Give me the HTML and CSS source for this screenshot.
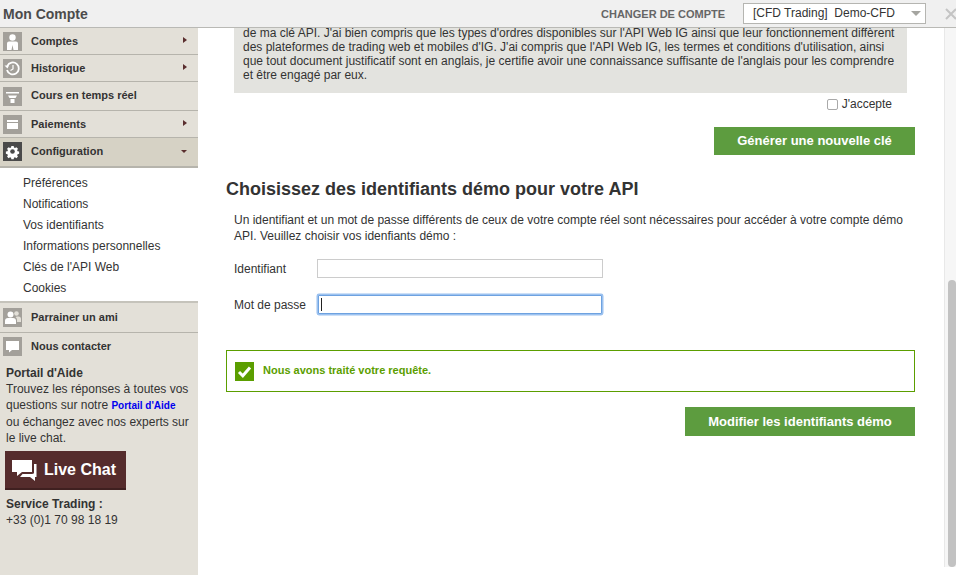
FILE: index.html
```html
<!DOCTYPE html>
<html lang="fr">
<head>
<meta charset="utf-8">
<title>Mon Compte</title>
<link rel="stylesheet" href="styles.css">
</head>
<body>
<div class="app">
  <header class="topbar">
    <div class="title">Mon Compte</div>
    <div class="switch-label">CHANGER DE COMPTE</div>
    <div class="select"><span>[CFD Trading]&nbsp; Demo-CFD</span><i class="select-arrow"></i></div>
    <svg class="close" width="16" height="16" viewBox="0 0 16 16"><path d="M3 3l10 10M13 3L3 13" stroke="#c4c4c4" stroke-width="2" fill="none"/></svg>
  </header>
  <div class="body">
    <aside class="sidebar">
      <nav>
        <a class="item item-a"><span class="ico"><svg viewBox="0 0 19 19"><circle cx="9.5" cy="5.5" r="3.2" fill="#fff"/><path d="M4 18v-6.500q0-2 2-2h7q2 0 2 2V18h-4.500l-1-5-1 5z" fill="#fff"/></svg></span><span class="label">Comptes</span><i class="arrow-r"></i></a>
        <a class="item item-b"><span class="ico"><svg viewBox="0 0 19 19"><path d="M4.300 7a6 6 0 1 1-.3 4" stroke="#fff" stroke-width="1.800" fill="none"/><path d="M1.500 6.500h4.500l-1.500 3z" fill="#fff"/><path d="M10 6v4l-2.500 1.500" stroke="#fff" stroke-width="1.200" fill="none"/></svg></span><span class="label">Historique</span><i class="arrow-r"></i></a>
        <a class="item item-a item-c"><span class="ico"><svg viewBox="0 0 19 19"><path d="M3 5h13v1.500H3zM5 8.500h9L12.500 11h-6zM7.500 12h4v4h-4z" fill="#fff"/></svg></span><span class="label">Cours en temps réel</span></a>
        <a class="item item-b"><span class="ico"><svg viewBox="0 0 19 19"><path d="M4 5h11v9H4z" fill="#fff"/><path d="M4 7h11v1H4z" fill="#a3a09a"/></svg></span><span class="label">Paiements</span><i class="arrow-r"></i></a>
        <a class="item item-open"><span class="ico ico-dark"><svg viewBox="0 0 19 19"><path d="M8 2.500h3l.4 2 1.300.6 1.800-1.100 2 2-1.100 1.800.6 1.300 2 .4v3l-2 .4-.6 1.300 1.100 1.800-2 2-1.800-1.100-1.300.6-.4 2H8l-.4-2-1.300-.6-1.800 1.100-2-2 1.100-1.800-.6-1.300-2-.4v-3l2-.4.6-1.300L2.500 6l2-2 1.800 1.100 1.300-.6z" transform="translate(2.100 2.100) scale(.78)" fill="#fff"/><circle cx="9.500" cy="9.500" r="2.300" fill="#4a4a4a"/></svg></span><span class="label">Configuration</span><i class="arrow-d"></i></a>
      </nav>
      <ul class="submenu">
        <li>Préférences</li>
        <li>Notifications</li>
        <li>Vos identifiants</li>
        <li>Informations personnelles</li>
        <li>Clés de l'API Web</li>
        <li>Cookies</li>
      </ul>
      <nav class="nav-second">
        <a class="item item-d"><span class="ico"><svg viewBox="0 0 19 19"><circle cx="7.500" cy="6.500" r="3" fill="#fff"/><path d="M2 16v-3q0-3 3-3h5q3 0 3 3v3z" fill="#fff"/><circle cx="13.500" cy="5.500" r="2.300" fill="#e3e0d8"/><path d="M14 8.500h1.500q2.500 0 2.500 2.500v3h-4v-2q0-2-1.500-3z" fill="#e3e0d8"/></svg></span><span class="label">Parrainer un ami</span></a>
        <a class="item item-e"><span class="ico"><svg viewBox="0 0 19 19"><path d="M3 4h13v9H9l-3 2.500V13H3z" fill="#fff"/></svg></span><span class="label">Nous contacter</span></a>
      </nav>
      <section class="help">
        <h3 class="help-title">Portail d'Aide</h3>
        <p class="help-text">Trouvez les réponses à toutes vos questions sur notre <a class="help-link">Portail d'Aide</a> ou échangez avec nos experts sur le live chat.</p>
        <a class="live-chat">
          <svg width="26" height="24" viewBox="0 0 26 24"><path d="M1 2h20v12H11l-5 4v-4H1z" fill="#fff"/><path d="M23 6h2.500v13H24v4l-5-4H9l3-3.500h11z" fill="#fff"/><path d="M21.500 5v10.500H11.500" fill="none" stroke="#552c2c" stroke-width="1"/></svg>
          <span>Live Chat</span>
        </a>
        <h3 class="trading-title">Service Trading :</h3>
        <p class="trading-phone">+33 (0)1 70 98 18 19</p>
      </section>
    </aside>
    <main class="main">
      <div class="content">
        <div class="terms">de ma clé API. J'ai bien compris que les types d'ordres disponibles sur l'API Web IG ainsi que leur fonctionnement diffèrent<br>des plateformes de trading web et mobiles d'IG. J'ai compris que l'API Web IG, les termes et conditions d'utilisation, ainsi<br>que tout document justificatif sont en anglais, je certifie avoir une connaissance suffisante de l'anglais pour les comprendre<br>et être engagé par eux.</div>
        <label class="accept"><input class="check" type="checkbox"><span>J'accepte</span></label>
        <div class="actions actions-first"><button class="btn btn-key">Générer une nouvelle clé</button></div>
        <h2 class="heading">Choisissez des identifiants démo pour votre API</h2>
        <p class="intro">Un identifiant et un mot de passe différents de ceux de votre compte réel sont nécessaires pour accéder à votre compte démo<br>API. Veuillez choisir vos idenfiants démo :</p>
        <div class="field field-first"><label class="field-label">Identifiant</label><input class="input" type="text"></div>
        <div class="field field-second"><label class="field-label">Mot de passe</label><span class="input-wrap"><input class="input input-focus" type="password"><i class="caret"></i></span></div>
        <div class="success">
          <svg class="success-ico" width="19" height="19" viewBox="0 0 19 19"><rect width="19" height="19" fill="#5b9e00"/><path d="M4 10l3.800 3.800L15 5.500" stroke="#fff" stroke-width="3" fill="none"/></svg>
          <span class="success-text">Nous avons traité votre requête.</span>
        </div>
        <div class="actions actions-second"><button class="btn btn-save">Modifier les identifiants démo</button></div>
      </div>
      <div class="scrolltrack"><div class="thumb"></div></div>
    </main>
  </div>
</div>
</body>
</html>
```
FILE: styles.css
```css
* { box-sizing: border-box; }
html, body { margin: 0; padding: 0; height: 100%; overflow: hidden; background: #fff; }
body { font-family: "Liberation Sans", Arial, sans-serif; font-size: 12px; color: #333; }
.app { width: 956px; height: 575px; display: flex; flex-direction: column; overflow: hidden; }

.topbar { flex: none; height: 28px; background: #f0f0f0; border-bottom: 1px solid #b9b9b5; display: flex; align-items: center; padding-left: 3px; overflow: hidden; }
.title { font-size: 14px; font-weight: 700; color: #4b4b4b; width: 598px; flex: none; }
.switch-label { font-size: 11px; font-weight: 700; color: #666; width: 142px; flex: none; }
.select { flex: none; width: 183px; height: 21px; margin-bottom: 1px; background: #fff; border: 1px solid #b5b5b1; display: flex; align-items: center; justify-content: space-between; padding: 0 4px 0 9px; font-size: 12px; color: #333; }
.select-arrow { width: 0; height: 0; border-left: 5.500px solid transparent; border-right: 5.500px solid transparent; border-top: 5px solid #a5a5a0; }
.close { flex: none; margin-left: 17px; }

.body { flex: 1; display: flex; min-height: 0; }
.sidebar { flex: none; width: 198px; background: #e3e0d8; display: flex; flex-direction: column; }
.item { display: flex; align-items: flex-start; position: relative; border-bottom: 1px solid #b6b4ac; padding-left: 3px; font-weight: 700; font-size: 11px; color: #333; }
.item-a { height: 27px; padding-top: 4px; }
.item-b { height: 27px; padding-top: 4px; }
.item-c { height: 29px; padding-top: 5px; }
.item-c .label { line-height: 17px; }
.item-open { height: 30px; padding-top: 4px; background: #d6d2c5; border-bottom: 2px solid #b6b4ac; }
.item-d { height: 32px; padding-top: 5px; border-top: 2px solid #c5c3bb; }
.item-e { height: 26px; padding-top: 4px; border-bottom: none; }
.ico { flex: none; width: 19px; height: 19px; background: #a3a09a; display: block; }
.ico svg { display: block; width: 19px; height: 19px; }
.ico-dark { background: #4a4a4a; }
.label { margin-left: 9px; line-height: 19px; }
.arrow-r { position: absolute; left: 183px; top: 9px; width: 0; height: 0; border-top: 3.500px solid transparent; border-bottom: 3.500px solid transparent; border-left: 4px solid #5a2e2e; }
.arrow-d { position: absolute; left: 181px; top: 12px; width: 0; height: 0; border-left: 3.500px solid transparent; border-right: 3.500px solid transparent; border-top: 3.500px solid #5a2e2e; }

.submenu { list-style: none; margin: 0; padding: 5px 0 2px 23px; background: #fff; }
.submenu li { height: 21px; line-height: 21px; font-size: 12px; color: #333; }

.help { padding: 0 0 0 6px; }
.help-title { margin: 6px 0 0; font-size: 12px; line-height: 16px; font-weight: 700; color: #333; }
.help-text { margin: 0; width: 184px; font-size: 12px; line-height: 16px; color: #333; }
.help-link { font-size: 10px; font-weight: 700; color: #0000ee; }
.live-chat { display: flex; align-items: center; margin: 5px 0 0 -1px; width: 121px; height: 39px; padding: 0 0 0 6px; background: #552c2c; border-bottom: 2px solid #3f2020; color: #fff; font-size: 16px; font-weight: 700; }
.live-chat span { margin-left: 7px; }
.trading-title { margin: 6px 0 0; font-size: 12px; line-height: 16px; font-weight: 700; color: #333; }
.trading-phone { margin: 0; font-size: 12px; line-height: 16px; color: #333; }

.main { flex: 1; min-width: 0; display: flex; overflow: hidden; }
.content { flex: 1; min-width: 0; padding: 0 29px 0 28px; }
.terms { margin: -2px 8px 0; padding: 0 9px 12px; background: #e3e3df; font-size: 12px; line-height: 14px; white-space: nowrap; color: #333; height: 67px; }
.accept { display: flex; align-items: center; justify-content: flex-end; height: 16px; margin: 3px 23px 0 0; font-size: 12px; color: #333; }
.check { appearance: none; margin: 0 4px 0 0; width: 11px; height: 11px; border: 1px solid #a9a9a9; border-radius: 2px; background: #fff; }
.actions { display: flex; justify-content: flex-end; }
.actions-first { margin-top: 15px; }
.actions-second { margin-top: 15px; }
.btn { border: 0; padding: 0; background: #5d9c3f; color: #fff; font-family: inherit; font-size: 13px; font-weight: 700; }
.btn-key { width: 201px; height: 28px; padding-bottom: 2px; }
.btn-save { width: 230px; height: 29px; }
.heading { margin: 23px 0 0; font-size: 18px; line-height: 22px; font-weight: 700; color: #333; }
.intro { margin: 12px 0 0 8px; font-size: 12px; line-height: 16px; color: #333; white-space: nowrap; }
.field { display: flex; align-items: center; margin-left: 8px; }
.field-first { margin-top: 15px; }
.field-second { margin-top: 17px; }
.field-label { width: 83px; flex: none; font-size: 12px; color: #333; }
.input { display: block; width: 286px; height: 19px; margin: 0; padding: 0 3px; border: 1px solid #ccc; background: #fff; outline: 0; }
.input-wrap { position: relative; display: block; }
.input-focus { margin-left: 1px; width: 284px; border: 1px solid #6ea2e0; box-shadow: 0 0 0 1.500px #9cc2f0; border-radius: 1px; }
.caret { position: absolute; left: 4px; top: 3px; width: 1px; height: 13px; background: #222; }
.success { display: flex; align-items: center; height: 42px; margin-top: 36px; padding-left: 8px; border: 1px solid #5b9e00; font-size: 11px; font-weight: 700; color: #5b9e00; }
.success-ico { flex: none; margin-right: 9px; }
.success-text { margin-bottom: 2px; }

.scrolltrack { flex: none; width: 12px; height: 539px; background: #f6f6f6; border-left: 1px solid #e8e8e8; padding: 252px 0 0 3px; }
.thumb { width: 8px; height: 287px; background: #c2c2c2; border-radius: 4px; }
```
